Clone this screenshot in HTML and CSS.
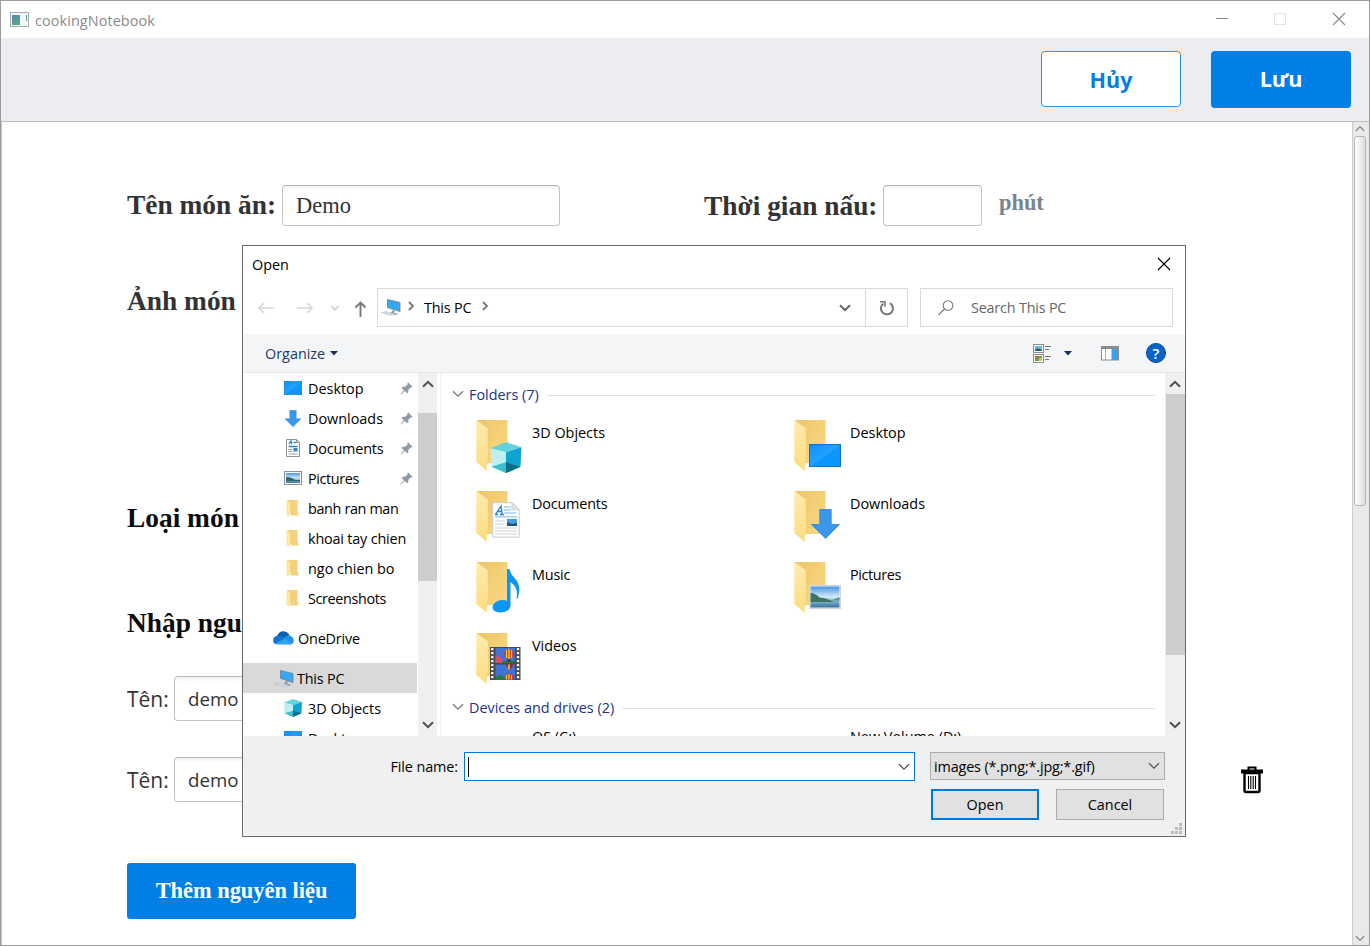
FILE: index.html
```html
<!DOCTYPE html>
<html lang="vi">
<head>
<meta charset="utf-8">
<title>cookingNotebook</title>
<link rel="stylesheet" href="styles.css">
</head>
<body>
<svg class="defs" width="0" height="0">
  <defs>
    <linearGradient id="gBack" x1="0" y1="0" x2="1" y2="1"><stop offset="0" stop-color="#ebc568"/><stop offset=".5" stop-color="#f4d076"/><stop offset="1" stop-color="#f9d985"/></linearGradient>
    <linearGradient id="gFlap" x1="0" y1="0" x2="0" y2="1"><stop offset="0" stop-color="#ffebaf"/><stop offset="1" stop-color="#fcdc82"/></linearGradient>
    <linearGradient id="gDesk" x1="0" y1="0" x2="1" y2="1"><stop offset="0" stop-color="#0a8ffb"/><stop offset=".5" stop-color="#24a2ff"/><stop offset=".52" stop-color="#0e97ff"/><stop offset="1" stop-color="#0a94fb"/></linearGradient>
    <linearGradient id="gSky" x1="0" y1="0" x2="0" y2="1"><stop offset="0" stop-color="#4b93e2"/><stop offset=".5" stop-color="#d3ecf9"/><stop offset=".65" stop-color="#8fbdd4"/><stop offset="1" stop-color="#35709e"/></linearGradient>
    <symbol id="folder" viewBox="0 0 50 54">
      <path d="M2 1h30.500v43H14l-4 3z" fill="url(#gBack)"/>
      <path d="M12.500 44h7v4l-7 3z" fill="#fff"/>
      <path d="M1.300.8L12.800 9.500v31l-1 1.500V52L1.300 43z" fill="url(#gFlap)"/>
    </symbol>
    <symbol id="cube" viewBox="0 0 32 32">
      <path d="M0 6.500L16 0l16 5.500-16 5z" fill="#62d3dd"/>
      <path d="M0 6.500l16 4V32L1 25.500z" fill="#c0eef2"/>
      <path d="M16 10.500l16-5-1 20L16 32z" fill="#10a3d0"/>
      <path d="M1 25.500L16 21v11z" fill="#38bfcb"/>
      <path d="M16 21l15 4.500L16 32z" fill="#0c6f86"/>
    </symbol>
    <symbol id="desk" viewBox="0 0 32 23" preserveAspectRatio="none"><rect x=".5" y=".5" width="31" height="22" fill="url(#gDesk)" stroke="#0c77c4"/></symbol>
    <symbol id="arrow" viewBox="0 0 28 29"><path d="M8.500.5h11v14.500h8L14 28.500.5 15h8z" fill="#3a97ea" stroke="#2b86dc" stroke-width=".8"/></symbol>
    <symbol id="photo" viewBox="0 0 32 24" preserveAspectRatio="none">
      <rect x=".5" y=".5" width="31" height="23" fill="#f3f6f9" stroke="#ccd6df"/>
      <rect x="1.500" y="1.500" width="29" height="21" fill="url(#gSky)"/>
      <path d="M1.500 8q5 0 9 4.500 8 .5 14 4.500h-23z" fill="#3d7465"/><path d="M30.500 12l-8 3.500h8z" fill="#5d8f8c"/>
    </symbol>
    <symbol id="paper" viewBox="0 0 28 36" preserveAspectRatio="none">
      <path d="M.7.700h19.500l7 7v27.500H.7z" fill="#fcfdfe" stroke="#c8ccd0"/>
      <path d="M20 .7v7h7z" fill="#e2e6ea" stroke="#c0c5ca" stroke-width=".7"/>
      <path d="M3.500 12.500L9 4l1 8.500M5.500 9.500h5M3 12.500h3M8 12.500h4" fill="none" stroke="#1e88d8" stroke-width="1.300"/>
      <path d="M12 5h7M12 8h7M12 11h12M3 14.800h22" stroke="#7fbdeb"/>
      <path d="M3 19h10M3 22h10M3 26h22M3 29h22M3 32h22" stroke="#d0d3d6"/>
      <rect x="15" y="17" width="10" height="7" fill="#459cd8"/><path d="M15 20l5 2 5-1v3H15z" fill="#1d5475"/>
    </symbol>
    <symbol id="pc" viewBox="0 0 20 17">
      <path d="M6.500.5l12.500 3v9L6.500 8.500z" fill="#35a8f5" stroke="#71879a" stroke-width=".9"/>
      <path d="M12 11l2 1-1 2 4 .5-2 1.500-6-1.500z" fill="#8b99a3"/>
      <path d="M0 13.500l5-1 9 2.500-4 1.500z" fill="#d3dbe1" stroke="#b5bec5" stroke-width=".5"/>
    </symbol>
    <symbol id="sfolder" viewBox="0 0 13 17"><path d="M1 0h10.500v11.500l1.500 4H5z" fill="#f4d17a"/><path d="M.5 0L4 2.500v12L3 17 .5 15z" fill="#ffe7a0"/></symbol>
    <symbol id="pin" viewBox="0 0 13 13"><path d="M8 .3L12.700 5l-1.200.6-.8-.2-2.400 2.400.1 2.500-1.300 1L4.700 9 .8 12.600.300 12.200 3.900 8.200 1.700 6l1-1.300 2.500.1 2.400-2.400-.2-.9z" fill="#8e9ba6"/></symbol>
    <symbol id="chevD" viewBox="0 0 12 8"><path d="M1 1.200l5 5 5-5" fill="none" stroke="currentColor" stroke-width="var(--sw,1.300)"/></symbol>
    <symbol id="chevR" viewBox="0 0 7 10"><path d="M1 1l4 4-4 4" fill="none" stroke="#777" stroke-width="1.800"/></symbol>
    <symbol id="x" viewBox="0 0 14 14"><path d="M1 1l12 12M13 1L1 13" fill="none" stroke="currentColor" stroke-width="1.100"/></symbol>
  </defs>
</svg>

<div class="window">
  <header class="titlebar">
    <svg class="app-icon" width="19" height="15" viewBox="0 0 19 15"><defs><linearGradient id="ga" x1="0" y1="0" x2=".6" y2="1"><stop offset="0" stop-color="#5a84b4"/><stop offset="1" stop-color="#58a87c"/></linearGradient></defs><rect x=".5" y=".5" width="18" height="14" fill="#f4f5f6" stroke="#a7abae"/><rect x="2" y="3" width="8" height="10" fill="url(#ga)"/><path d="M16.500 3v6" stroke="#58a88a"/></svg>
    <span class="app-name">cookingNotebook</span>
    <svg class="win-min" width="12" height="12"><path d="M0 5.500h12" stroke="#8a8a8a"/></svg>
    <svg class="win-max" width="12" height="12"><rect x=".5" y=".5" width="11" height="11" fill="none" stroke="#e4e4e4"/></svg>
    <svg class="win-close" width="14" height="14"><use href="#x"/></svg>
  </header>
  <div class="toolbar">
    <button class="btn btn-outline">Hủy</button>
    <button class="btn btn-primary">Lưu</button>
  </div>
  <div class="pane">
    <main class="form">
      <div class="row first">
        <label class="label name-label">Tên món ăn:</label><div class="field name">Demo</div>
        <label class="label time-label">Thời gian nấu:</label><div class="field time"></div><span class="unit">phút</span>
      </div>
      <div class="label photo-label">Ảnh món</div>
      <div class="label dark type-label">Loại món</div>
      <div class="label dark ingr-label">Nhập ngu</div>
      <div class="row ingr"><span>Tên:</span><div class="field small">demo</div></div>
      <div class="row ingr second"><span>Tên:</span><div class="field small">demo</div>
        <svg class="trash" width="22" height="28" viewBox="0 0 22 28"><path d="M7.500 4V1.500h7V4M1 6.500V4.500h20v2z" fill="none" stroke="#000" stroke-width="2"/><path d="M3.500 7h15v17.500q0 1.500-1.500 1.500H5q-1.500 0-1.500-1.500z" fill="none" stroke="#000" stroke-width="2.400"/><path d="M7.500 10v13M9.800 10v13M12.200 10v13M14.500 10v13" stroke="#000" stroke-width="1.100"/></svg>
      </div>
      <button class="add">Thêm nguyên liệu</button>
    </main>
    <div class="vscroll">
      <svg width="10" height="7"><use href="#chevD" transform="rotate(180 5 3.500)" width="10" height="7"/></svg>
      <div class="vthumb"></div>
      <svg class="vdown" width="10" height="7"><use href="#chevD" width="10" height="7"/></svg>
    </div>
  </div>
</div>

<section class="dialog">
  <div class="d-title"><span>Open</span><svg width="14" height="14"><use href="#x"/></svg></div>
  <div class="d-nav">
    <svg class="arrows" width="118" height="20" fill="none">
      <path d="M9 5l-5 5 5 5M4 10h15" stroke="#d6d6d6" stroke-width="1.500"/>
      <path d="M52 5l5 5-5 5M57 10H42" stroke="#d6d6d6" stroke-width="1.500"/>
      <path d="M76 8l3.800 3.800L83.600 8" stroke="#d0d0d0" stroke-width="1.600"/>
      <path d="M100.500 9.500L105.500 4.500l5 5M105.500 5v14" stroke="#777" stroke-width="1.900"/>
    </svg>
    <div class="address">
      <svg class="a-pc" width="20" height="17"><use href="#pc"/></svg>
      <svg class="a-c1" width="7" height="10"><use href="#chevR"/></svg>
      <span class="t-pc">This PC</span>
      <svg class="a-c2" width="7" height="10"><use href="#chevR"/></svg>
      <svg class="a-drop" width="12" height="8"><use href="#chevD"/></svg>
      <div class="refresh"><svg width="16" height="16" fill="none"><path d="M11 3.200A6 6 0 1 1 4.300 3.600" stroke="#777" stroke-width="2"/><path d="M1 1.800h5v5" stroke="#777" stroke-width="1.500"/></svg></div>
    </div>
    <div class="search"><svg width="16" height="16" fill="none" stroke="#777" stroke-width="1.100"><circle cx="10" cy="5.500" r="4.800"/><path d="M6.500 9L.5 15"/></svg><span>Search This PC</span></div>
  </div>
  <div class="d-cmd">
    <span class="organize">Organize</span>
    <svg class="tri" width="8" height="5"><path d="M0 0h8L4 4.500z" fill="#16325c"/></svg>
    <svg class="view" width="19" height="19" fill="none"><rect x=".5" y=".5" width="10" height="8" fill="#fff" stroke="#8c8c8c"/><rect x="2" y="2" width="7" height="5" fill="#6cb0e4"/><path d="M2 5.500l3-1 4 1.500v1H2z" fill="#215f55"/><rect x=".5" y="10.500" width="10" height="8" fill="#fff" stroke="#8c8c8c"/><rect x="2" y="12" width="7" height="5" fill="#6c9f4b"/><path d="M2 12h3v3H2z" fill="#c8643c"/><path d="M6 14h3v3H6z" fill="#e3be4b"/><path d="M12 2.500h6M12 5.500h4M12 12.500h6M12 15.500h4" stroke="#777"/></svg>
    <svg class="tri2" width="8" height="5"><path d="M0 0h8L4 4.500z" fill="#16325c"/></svg>
    <svg class="preview" width="18" height="15"><rect x=".5" y=".5" width="17" height="13.500" fill="#fff" stroke="#858b91"/><path d="M0 1.500h18" stroke="#858b91" stroke-width="3"/><path d="M4.500 3v11" stroke="#aaa"/><rect x="10.500" y="3" width="6.500" height="11" fill="#3f9fe8"/></svg>
    <div class="help">?</div>
  </div>
  <div class="d-body">
    <nav class="tree">
      <div class="item"><svg width="18" height="14"><use href="#desk"/></svg><span>Desktop</span><svg class="pin" width="13" height="13"><use href="#pin"/></svg></div>
      <div class="item"><svg width="18" height="17"><use href="#arrow"/></svg><span>Downloads</span><svg class="pin" width="13" height="13"><use href="#pin"/></svg></div>
      <div class="item"><svg width="18" height="18" viewBox="0 0 18 18"><path d="M2.500.5h10l3 3v14h-13z" fill="#fff" stroke="#8b9197"/><path d="M12.500.5v3h3" fill="none" stroke="#8b9197"/><path d="M5 5l2-3 1 3M9.500 3.500H12M4.500 7.500h9" stroke="#1e88d8" fill="none" stroke-width="1.300"/><path d="M4.500 10.500h4M4.500 12.500h4M4.500 15h9" stroke="#9aa0a5"/><path d="M9.500 9h4v3.500h-4z" fill="#2e86c0"/></svg><span class="tight">Documents</span><svg class="pin" width="13" height="13"><use href="#pin"/></svg></div>
      <div class="item"><svg width="18" height="14" viewBox="0 0 18 14"><rect x=".5" y=".5" width="17" height="13" fill="#fff" stroke="#8b9197"/><rect x="2" y="2" width="14" height="10" fill="url(#gSky)"/><path d="M2 6q6 0 9 3h5v1H2z" fill="#2f6a60"/></svg><span class="tighter">Pictures</span><svg class="pin" width="13" height="13"><use href="#pin"/></svg></div>
      <div class="item"><svg width="18" height="17"><use href="#sfolder" x="2" width="13" height="17"/></svg><span class="tighter">banh ran man</span></div>
      <div class="item"><svg width="18" height="17"><use href="#sfolder" x="2" width="13" height="17"/></svg><span class="tight">khoai tay chien</span></div>
      <div class="item"><svg width="18" height="17"><use href="#sfolder" x="2" width="13" height="17"/></svg><span>ngo chien bo</span></div>
      <div class="item"><svg width="18" height="17"><use href="#sfolder" x="2" width="13" height="17"/></svg><span class="tighter">Screenshots</span></div>
      <div class="item top spaced"><svg width="21" height="14" viewBox="0 0 21 14"><path d="M4 5Q6 0 10.500.2 15 .5 16.500 4.500L11 9z" fill="#0c5fb0"/><path d="M4.500 4.800Q7 4 9.500 5.800L15 9 3 13.300Q0 12.500.2 9 .5 5.300 4.500 4.800z" fill="#1272cd"/><path d="M10 8.500q2.500-4.500 6.500-4 4 1 4.200 5-.2 3.800-4 4z" fill="#1c90e4"/><path d="M2 12.800L11.500 7.500l8 4.800q-1.200 1.300-3 1.300H5q-2 0-3-.8z" fill="#2ba5f0"/></svg><span class="tight">OneDrive</span></div>
      <div class="item top spaced selected"><svg width="20" height="17"><use href="#pc"/></svg><span class="t-pc">This PC</span></div>
      <div class="item"><svg width="18" height="18"><use href="#cube"/></svg><span>3D Objects</span></div>
      <div class="item"><svg width="18" height="14"><use href="#desk"/></svg><span>Desktop</span></div>
    </nav>
    <div class="sbar"><svg width="12" height="8"><use href="#chevD" transform="rotate(180 6 4)"/></svg><div class="thumb t1"></div><svg class="down" width="12" height="8"><use href="#chevD"/></svg></div>
    <div class="files">
      <div class="group"><svg width="12" height="8"><use href="#chevD"/></svg><span>Folders (7)</span><i></i></div>
      <div class="grid">
        <div class="file"><svg width="50" height="54"><use href="#folder" width="50" height="54"/><use href="#cube" x="15" y="23" width="32" height="31"/></svg><span>3D Objects</span></div>
        <div class="file"><svg width="50" height="54"><use href="#folder" width="50" height="54"/><use href="#desk" x="16" y="25" width="32" height="23"/></svg><span>Desktop</span></div>
        <div class="file"><svg width="50" height="54"><use href="#folder" width="50" height="54"/><use href="#paper" x="17" y="12" width="28" height="36"/></svg><span class="tight">Documents</span></div>
        <div class="file"><svg width="50" height="54"><use href="#folder" width="50" height="54"/><use href="#arrow" x="18" y="19" width="29" height="30"/></svg><span>Downloads</span></div>
        <div class="file"><svg width="50" height="54"><use href="#folder" width="50" height="54"/><path d="M32 8h2.500q1 5 5 9 8 8 3 21l-1-.5Q44 27 35.500 21v24q-1 6-9.500 6.500-8 0-8.500-5Q18 40 27 39q3-.2 5 1z" fill="#0a97f5"/></svg><span class="tight">Music</span></div>
        <div class="file"><svg width="50" height="54"><use href="#folder" width="50" height="54"/><use href="#photo" x="16" y="24" width="32" height="24"/></svg><span class="tighter">Pictures</span></div>
        <div class="file"><svg width="50" height="54"><use href="#folder" width="50" height="54"/><rect x="15" y="15" width="30.500" height="33" fill="#4a4a4a"/><path d="M17.300 16v32M43 16v32" stroke="#f4f4f4" stroke-width="2.400" stroke-dasharray="2.200 1.800"/><rect x="20.500" y="16" width="19.500" height="15" fill="#3f74d4"/><rect x="20.500" y="32.500" width="19.500" height="15" fill="#3f74d4"/><path d="M20.500 25l3-2 4 4 3 4h-10z" fill="#c9506f"/><path d="M28 29h12v2H27zM20.500 45l5-2 6 4.500h-11z" fill="#237a3d"/><ellipse cx="34" cy="22" rx="4.800" ry="5" fill="#d5242f"/><path d="M34 17v10M31.500 18v8M36.500 18v8" stroke="#f3cd2f" stroke-width="1.400"/><path d="M32.500 27.500h3v2h-3z" fill="#3a2a20"/><path d="M30.500 32.500h8L35 38z" fill="#a01f25"/><path d="M34 32.500v5" stroke="#f3cd2f" stroke-width="1.600"/><path d="M29.500 47.500q0-6 4.800-6t4.800 6z" fill="#d5242f"/><path d="M34 42v5.500M31.500 43v4.500M36.500 43v4.500" stroke="#f3cd2f" stroke-width="1.300"/></svg><span>Videos</span></div>
      </div>
      <div class="group"><svg width="12" height="8"><use href="#chevD"/></svg><span>Devices and drives (2)</span><i></i></div>
      <div class="grid drives"><div class="file"><b></b><span>OS (C:)</span></div><div class="file"><b></b><span>New Volume (D:)</span></div></div>
    </div>
    <div class="sbar main-bar"><svg width="12" height="8"><use href="#chevD" transform="rotate(180 6 4)"/></svg><div class="thumb t2"></div><svg class="down" width="12" height="8"><use href="#chevD"/></svg></div>
  </div>
  <footer class="d-foot">
    <div class="f-row"><label>File name:</label><div class="f-input"><u></u><svg width="12" height="8"><use href="#chevD"/></svg></div><div class="f-select"><span>images (*.png;*.jpg;*.gif)</span><svg width="12" height="8"><use href="#chevD"/></svg></div></div>
    <div class="f-row buttons"><button class="fb default">Open</button><button class="fb">Cancel</button></div>
    <svg class="grip" width="11" height="11" fill="#bcbcbc"><path d="M8 0h3v3H8zM4 4h3v3H4zM8 4h3v3H8zM0 8h3v3H0zM4 8h3v3H4zM8 8h3v3H8z"/></svg>
  </footer>
</section>
</body>
</html>
```
FILE: styles.css
```css
* { box-sizing: border-box; }
body { margin: 0; width: 1370px; height: 946px; overflow: hidden; background: #fff; font-family: "Open Sans", "Noto Sans", sans-serif; }
svg { display: block; flex: none; }
button { font-family: inherit; padding: 0; margin: 0; }
.defs { position: absolute; }

.window { width: 1370px; height: 946px; border: 1px solid #9b9b9b; display: flex; flex-direction: column; }
.titlebar { height: 37px; flex: none; display: flex; align-items: center; padding: 0 0 1px 9px; color: #8a8a8a; font-size: 14.4px; }
.app-name { margin: 2px 0 0 6px; flex: 1; letter-spacing: .1px; }
.win-min { margin-right: 46px; }
.win-max { margin-right: 46px; }
.win-close { margin-right: 23px; }
.toolbar { height: 83px; flex: none; background: #ecedf1; display: flex; justify-content: flex-end; gap: 30px; padding: 13px 18px 0 0; }
.btn { width: 140px; height: 56px; border-radius: 4px; font-size: 21.500px; font-weight: 700; border: 0; }
.btn-outline { height: 56px; background: #fff; color: #0080e6; border: 1.500px solid #2a93ea; }
.btn-primary { height: 57px; padding-bottom: 2px; background: #0080e6; color: #fff; }

.pane { flex: 1; display: flex; border-top: 1px solid #bcbec2; border-left: 1px solid #c4c6ca; min-height: 0; }
.form { flex: 1; padding: 63px 0 0 125px; font-family: "Liberation Serif", serif; color: #333; }
.row { display: flex; align-items: center; }
.first { height: 41px; }
.label { font-size: 27.400px; font-weight: 700; line-height: 32px; color: #333; white-space: nowrap; }
.dark { color: #0c0c0c; }
.field { height: 41px; border: 1px solid #c2c2c2; border-top-color: #b4b4b4; border-radius: 4px; background: linear-gradient(#f1f1f1, #fff 5px); padding-left: 13px; font-size: 22.500px; line-height: 39px; color: #333; }
.name-label { width: 149px; margin-top: -1px; }
.name { width: 278px; margin-left: 6px; }
.time-label { margin-left: 144px; width: 173px; }
.time { width: 99px; margin-left: 6px; }
.unit { margin-left: 17px; font-size: 22.400px; font-weight: 700; color: #778593; position: relative; top: -3px; }
.photo-label { margin-top: 59px; }
.type-label { margin-top: 185px; }
.ingr-label { margin-top: 73px; }
.ingr { margin-top: 37px; height: 45px; font-family: "Open Sans", sans-serif; font-size: 21px; }
.ingr span { width: 41px; }
.second { margin-top: 36px; }
.small { width: 300px; height: 45px; line-height: 43px; margin-left: 6px; font-size: 18.700px; }
.trash { margin: 0 0 0 767px; }
.add { display: block; margin-top: 61px; width: 229px; height: 56px; border: 0; border-radius: 3px; background: #0080e6; color: #fff; font: 700 22.400px "Liberation Serif", serif; }
.vscroll { width: 17px; background: #e9e9e9; border-left: 1px solid #ccc; display: flex; flex-direction: column; align-items: center; padding: 3px 2px 3px 0; color: #777; }
.vthumb { margin-top: 4px; width: 12px; height: 370px; border: 1px solid #b5b5b5; border-radius: 3px; background: linear-gradient(90deg, #fff, #dedede); }
.vdown { margin-top: auto; }

.dialog { position: absolute; left: 242px; top: 245px; width: 944px; height: 592px; border: 1px solid #6b6b6b; background: #fff; display: flex; flex-direction: column; font-size: 14.400px; color: #000; white-space: nowrap; }
.d-title { height: 37px; flex: none; display: flex; align-items: center; justify-content: space-between; padding: 0 14px 0 9px; }
.d-title svg { margin-bottom: 1px; }
.d-nav { height: 51px; flex: none; display: flex; padding-top: 5px; }
.arrows { width: 118px; margin: 10px 0 0 12px; }
.address { margin-left: 4px; width: 531px; height: 39px; border: 1px solid #d9d9d9; display: flex; align-items: center; }
.a-pc { margin-left: 3px; }
.a-c1 { margin: 0 9px 3px 7px; }
.a-c2 { margin: 0 0 3px 11px; }
.a-drop { margin-left: auto; margin-right: 14px; color: #666; --sw: 2; }
.refresh { width: 42px; height: 37px; border-left: 1px solid #d9d9d9; display: flex; align-items: center; justify-content: center; }
.search { margin-left: 12px; width: 253px; height: 39px; border: 1px solid #d9d9d9; display: flex; align-items: center; padding-left: 17px; gap: 17px; color: #666; letter-spacing: -.2px; }
.d-cmd { height: 39px; flex: none; background: #f4f5f7; border-bottom: 1px solid #e4e6e9; display: flex; align-items: center; padding-left: 22px; }
.organize { color: #1c3a6c; }
.tri { margin-left: 5px; }
.view { margin-left: auto; }
.tri2 { margin-left: 12px; }
.preview { margin-left: 29px; }
.help { margin: 0 19px 0 27px; width: 20px; height: 20px; border-radius: 50%; background: #0a64c8; border: 1px solid #0a4a9c; color: #fff; font-size: 15px; font-weight: 600; line-height: 18px; text-align: center; }
.d-body { height: 363px; flex: none; display: flex; overflow: hidden; }
.tree { width: 175px; overflow: hidden; }
.item { height: 30px; width: 174px; display: flex; align-items: center; padding: 0 4px 0 41px; }
.item span { margin-left: 6px; }
.item.top { padding-left: 30px; }
.item.top span { margin-left: 4px; }
.spaced { margin-top: 10px; }
.selected { background: #d9d9d9; }
.item.selected { padding-left: 31px; }
.item.selected span { margin-left: 3px; }
.tight { letter-spacing: -.18px; }
.tighter { letter-spacing: -.36px; }
.t-pc { letter-spacing: -.2px; }
.pin { margin-left: auto; }
.sbar { width: 19px; height: 363px; background: #f0f0f0; display: flex; flex-direction: column; align-items: center; padding: 7px 0; color: #505050; --sw: 2; }
.main-bar { width: 20px; }
.thumb { width: 19px; background: #cdcdcd; }
.t1 { height: 168px; margin-top: 25px; }
.t2 { height: 261px; margin-top: 6px; }
.down { margin-top: auto; }
.files { width: 725px; margin-left: 3px; border-left: 1px solid #f0f0f0; padding: 9px 0 0 11px; overflow: hidden; }
.group { height: 24px; display: flex; align-items: center; color: #1e3287; }
.group svg { color: #777; }
.group span { margin-left: 5px; }
.group i { flex: 1; height: 1px; margin: 2px 10px 0 8px; background: #e2e2e2; }
.grid { display: grid; grid-template-columns: 318px 318px; grid-auto-rows: 71px; margin: 6px 0 -1px 23px; }
.file { display: flex; align-items: flex-start; padding-top: 7px; }
.file span { margin: 4px 0 0 7px; }
.file b { width: 50px; }
.drives { margin-top: -3px; }
.d-foot { flex: 1; background: #f0f0f0; padding-top: 16px; position: relative; }
.f-row { display: flex; }
.f-row label { width: 215px; text-align: right; line-height: 29px; letter-spacing: -.1px; }
.f-input { margin-left: 6px; width: 451px; height: 29px; border: 1px solid #0078d7; background: #fff; display: flex; align-items: center; justify-content: space-between; padding: 0 4px 0 3px; color: #555; }
.f-input u { width: 1px; height: 20px; background: #000; }
.f-select { margin-left: 15px; width: 235px; height: 28px; border: 1px solid #adadad; background: #e1e1e1; display: flex; align-items: center; justify-content: space-between; padding: 0 4px 0 3px; }
.f-select span { letter-spacing: -.15px; }
.f-select svg { color: #555; }
.buttons { gap: 17px; margin: 8px 0 0 688px; }
.fb { width: 108px; height: 31px; background: #e1e1e1; border: 1px solid #adadad; font-size: 14.400px; color: #000; }
.default { border: 2px solid #0078d7; }
.grip { position: absolute; right: 3px; bottom: 2px; }
```
